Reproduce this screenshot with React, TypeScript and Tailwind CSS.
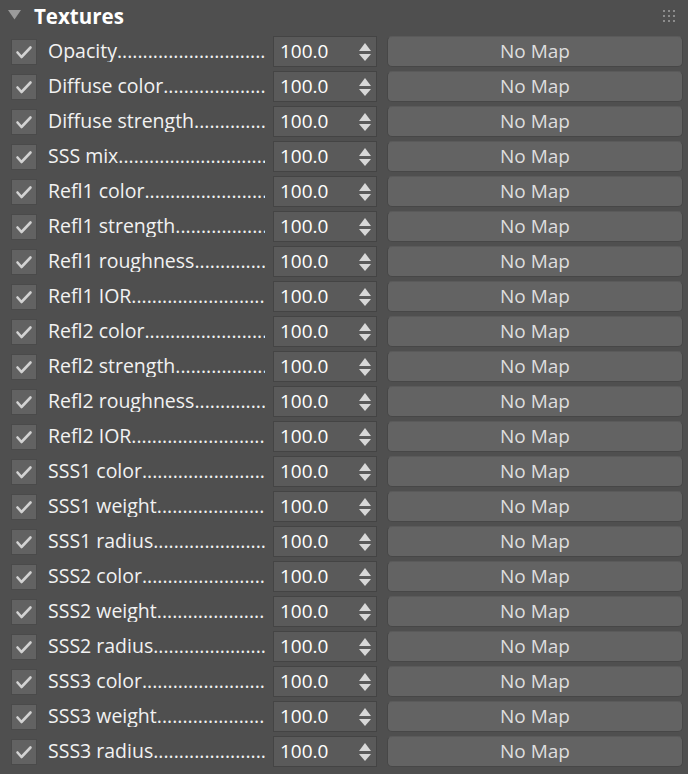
import React from 'react';

const rows = [
  'Opacity',
  'Diffuse color',
  'Diffuse strength',
  'SSS mix',
  'Refl1 color',
  'Refl1 strength',
  'Refl1 roughness',
  'Refl1 IOR',
  'Refl2 color',
  'Refl2 strength',
  'Refl2 roughness',
  'Refl2 IOR',
  'SSS1 color',
  'SSS1 weight',
  'SSS1 radius',
  'SSS2 color',
  'SSS2 weight',
  'SSS2 radius',
  'SSS3 color',
  'SSS3 weight',
  'SSS3 radius'
];

const dots = '.'.repeat(60);

function Check() {
  return (
    <div className="w-[26px] h-[26px] bg-[#626262] border border-[#4a4a4a] flex items-center justify-center shrink-0">
      <svg width="18" height="16" viewBox="0 0 18 16">
        <path d="M2.5 8.5 L6.5 13 L15.5 3.5" fill="none" stroke="#d2d2d2" strokeWidth="2.6" strokeLinejoin="round" strokeLinecap="round" />
      </svg>
    </div>
  );
}

function Spinner() {
  return (
    <div className="w-[104px] h-[31px] bg-[#5a5a5a] border border-[#444444] flex items-center pl-[6px] pr-[4px] shrink-0">
      <span className="flex-1 text-white">100.0</span>
      <svg width="12" height="20" viewBox="0 0 12 20" className="mr-[1px]">
        <path d="M6 1 L12 9 L0 9 Z" fill="#d8d8d8" />
        <path d="M0 12 L12 12 L6 19 Z" fill="#d8d8d8" />
      </svg>
    </div>
  );
}

export default function App() {
  return (
    <div className="w-[688px] h-[774px] bg-[#4f4f4f] overflow-hidden text-[19px] leading-none" style={{ fontFamily: '"Open Sans", "Liberation Sans", sans-serif' }}>
      {/* Rollout header */}
      <div className="h-[36px] flex items-start pt-[6px] relative">
        <svg width="13" height="10" viewBox="0 0 13 10" className="ml-[8px] mt-[4px]">
          <path d="M0 0 L13 0 L6.5 9.5 Z" fill="#9a9a9a" />
        </svg>
        <span className="ml-[13px] font-bold text-white text-[20.5px]">Textures</span>
        <div className="absolute right-[13px] top-[10px] grid grid-cols-3 gap-[3px]">
          {Array.from({ length: 9 }).map((_, i) => (
            <div key={i} className="w-[2px] h-[2px] bg-[#8c8c8c]" />
          ))}
        </div>
      </div>

      <div className="flex flex-col gap-[4px]">
        {rows.map((label) => (
          <div key={label} className="h-[31px] flex items-center">
            <div className="ml-[11px]">
              <Check />
            </div>
            <div className="ml-[11px] w-[217px] flex whitespace-nowrap overflow-hidden text-[#f2f2f2] text-[19.5px] pb-[1px]">
              <span className="shrink-0">{label}</span>
              <span className="min-w-0 overflow-hidden">{dots}</span>
            </div>
            <div className="ml-[8px]">
              <Spinner />
            </div>
            <div className="ml-[10px] w-[296px] h-[31px] rounded-[5px] bg-[#636363] border border-[#474747] border-t-[#5a5a5a] flex items-center justify-center text-[#dedede]">
              No Map
            </div>
          </div>
        ))}
      </div>
    </div>
  );
}
